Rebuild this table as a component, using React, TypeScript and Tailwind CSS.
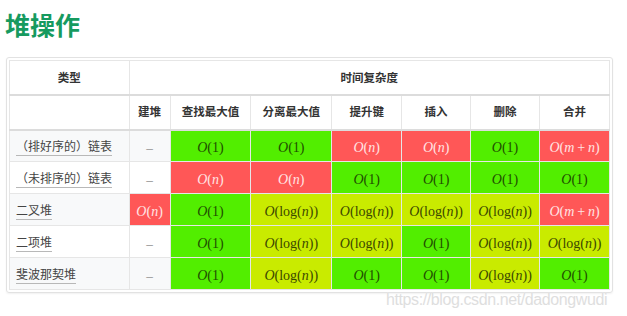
import React from 'react';

type Tone = 'g' | 'r' | 'y' | 'n';

const tones: Record<Tone, string> = {
  g: 'bg-[#52ee00] text-[#1f4d00]',
  r: 'bg-[#ff5757] text-[#ffe4e4]',
  y: 'bg-[#c9eb00] text-[#3b4700]',
  n: 'text-[#a0a0a0]',
};

const I = ({ children }: { children: React.ReactNode }) => <span className="italic">{children}</span>;

// formulas rendered as text, serif like TeX output
function Formula({ f }: { f: string }) {
  if (f === '–') return <span className="font-['Liberation_Sans',sans-serif] text-[12px]">–</span>;
  let body: React.ReactNode;
  if (f === '1') body = <>(1)</>;
  else if (f === 'n') body = <>(<I>n</I>)</>;
  else if (f === 'log') body = <>(log(<I>n</I>))</>;
  else body = <>(<I>m</I>&thinsp;+&thinsp;<I>n</I>)</>;
  return (
    <span className="font-['Liberation_Serif',serif] text-[14px]">
      <I>O</I>
      {body}
    </span>
  );
}

type Row = { name: string; cells: [Tone, string][] };

const rows: Row[] = [
  {
    name: '（排好序的）链表',
    cells: [['n', '–'], ['g', '1'], ['g', '1'], ['r', 'n'], ['r', 'n'], ['g', '1'], ['r', 'm']],
  },
  {
    name: '（未排序的）链表',
    cells: [['n', '–'], ['r', 'n'], ['r', 'n'], ['g', '1'], ['g', '1'], ['g', '1'], ['g', '1']],
  },
  {
    name: '二叉堆',
    cells: [['r', 'n'], ['g', '1'], ['y', 'log'], ['y', 'log'], ['y', 'log'], ['y', 'log'], ['r', 'm']],
  },
  {
    name: '二项堆',
    cells: [['n', '–'], ['g', '1'], ['y', 'log'], ['y', 'log'], ['g', '1'], ['y', 'log'], ['y', 'log']],
  },
  {
    name: '斐波那契堆',
    cells: [['n', '–'], ['g', '1'], ['y', 'log'], ['g', '1'], ['g', '1'], ['y', 'log'], ['g', '1']],
  },
];

const ops = ['建堆', '查找最大值', '分离最大值', '提升键', '插入', '删除', '合并'];
const widths = ['w-[120px]', 'w-[41px]', 'w-[81px]', 'w-[81px]', 'w-[70px]', 'w-[69px]', 'w-[69px]', 'w-[70px]'];

export default function App() {
  return (
    <div className="relative w-[627px] h-[316px] bg-white overflow-hidden font-['Noto_Sans_CJK_SC','Noto_Sans',sans-serif]">
      <h1 className="pl-[5px] pt-[11px] text-[25px] leading-[26px] font-bold text-[#169a5f]">堆操作</h1>

      <div className="mt-[20px] ml-[6px] w-[607px] rounded-[3px] border border-[#e2e2e2] p-[2px] shadow-[0_1px_2px_rgba(0,0,0,0.06)]">
        <table className="table-fixed border-collapse text-[#333]">
          <colgroup>
            {widths.map((w, i) => (
              <col key={i} className={w} />
            ))}
          </colgroup>
          <thead>
            <tr className="h-[34px] border-b-2 border-[#dcdcdc]">
              <th className="border border-[#e6e6e6] text-[11.5px] font-semibold">类型</th>
              <th colSpan={7} className="border border-[#e6e6e6] text-[11.5px] font-semibold">
                时间复杂度
              </th>
            </tr>
            <tr className="h-[35px] border-b-2 border-[#dcdcdc]">
              <th className="border border-[#e6e6e6]" />
              {ops.map((o) => (
                <th key={o} className="border border-[#e6e6e6] text-[11.5px] font-semibold">
                  {o}
                </th>
              ))}
            </tr>
          </thead>
          <tbody>
            {rows.map((r, ri) => (
              <tr key={r.name} className={ri % 2 === 0 ? 'h-[32px] bg-[#f8f9fa]' : 'h-[32px] bg-white'}>
                <td className="border border-[#e6e6e6] pl-[6px] text-[12px] text-[#444]">
                  <span className="border-b border-[#b8b8b8] pb-[1px]">{r.name}</span>
                </td>
                {r.cells.map(([t, f], ci) => (
                  <td key={ci} className={`border border-[#e6e6e6] text-center ${tones[t]}`}>
                    <Formula f={f} />
                  </td>
                ))}
              </tr>
            ))}
          </tbody>
        </table>
      </div>

      <div className="absolute left-[386px] top-[290px] font-['Liberation_Sans',sans-serif] text-[16px] leading-[20px] tracking-[-0.4px] text-[#dedede] [text-shadow:0_0_1px_#fff]">
        https://blog.csdn.net/dadongwudi
      </div>
    </div>
  );
}
